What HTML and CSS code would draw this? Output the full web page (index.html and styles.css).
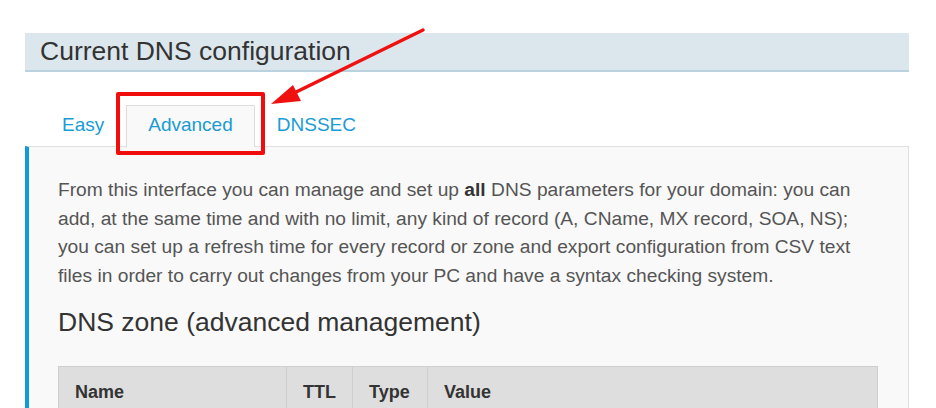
FILE: index.html
```html
<!DOCTYPE html>
<html lang="en">
<head>
	<meta charset="UTF-8">
	<title>DNS</title>
	<link rel="stylesheet" href="styles.css">
</head>
<body>
	<div class="main">
		<h2 class="box-title">Current DNS configuration</h2>
		<ul class="tabs">
			<li><a href="#">Easy</a></li>
			<li class="active"><a href="#">Advanced</a><span class="mark"></span></li>
			<li><a href="#">DNSSEC</a></li>
		</ul>
		<div class="panel">
			<p class="intro">From this interface you can manage and set up <b>all</b> DNS parameters for your domain: you can add, at the same time and with no limit, any kind of record (A, CName, MX record, SOA, NS); you can set up a refresh time for every record or zone and export configuration from CSV text files in order to carry out changes from your PC and have a syntax checking system.</p>
			<h3 class="zone-title">DNS zone (advanced management)</h3>
			<table class="zone">
				<colgroup>
					<col style="width:228px">
					<col style="width:66px">
					<col style="width:75px">
					<col>
				</colgroup>
				<tr>
					<th>Name</th>
					<th>TTL</th>
					<th>Type</th>
					<th>Value</th>
				</tr>
			</table>
		</div>
	</div>
	<!-- arrow pointing at the tab -->
	<svg class="arrow" width="936" height="408" viewBox="0 0 936 408">
		<line x1="423" y1="30" x2="288" y2="96" stroke="#f01010" stroke-width="3.5" stroke-linecap="round"/>
		<polygon points="271,104 293,85 301,101" fill="#f01010"/>
	</svg>
</body>
</html>
```

FILE: styles.css
```css
body{
	margin: 0;
	padding: 0;
	background: #fff;
	font-family: "Liberation Sans", Arial, sans-serif;
}
.main{
	width: 884px;
	margin: 0 0 0 25px;
	padding-top: 33px;
}
.box-title{
	margin: 0;
	height: 37px;
	line-height: 37px;
	padding-left: 15px;
	background: #dbe7ed;
	border-bottom: 2px solid #b9d2de;
	font-size: 26.5px;
	font-weight: normal;
	color: #333;
}
.tabs{
	list-style: none;
	margin: 33px 0 0 15px;
	padding: 0;
	display: flex;
}
.tabs li{
	position: relative;
	border: 1px solid transparent;
	border-bottom: 0;
	margin-bottom: -1px;
}
.tabs a{
	display: block;
	padding: 0 21px;
	height: 41px;
	line-height: 38px;
	font-size: 19px;
	color: #1b9bd4;
	text-decoration: none;
}
.tabs li.active{
	background: #f9f9f9;
	border-color: #dcdcdc;
}
.mark{
	position: absolute;
	left: -11px;
	right: -11px;
	top: -14px;
	bottom: -8px;
	border: 4px solid #f20d0d;
	border-radius: 2px;
}
.panel{
	background: #f9f9f9;
	border-top: 1px solid #e0e0e0;
	border-right: 1px solid #e0e0e0;
	border-left: 4px solid #0f9bd5;
	padding: 29px 30px 0 29px;
	height: 260px;
}
.intro{
	margin: 0;
	font-size: 19.2px;
	line-height: 28.5px;
	color: #555;
}
.intro b{ color: #333; }
.zone-title{
	margin: 17px 0 0;
	font-size: 26.5px;
	font-weight: normal;
	color: #333;
	line-height: 30px;
}
.zone{
	margin-top: 29px;
	width: 820px;
	border-collapse: collapse;
	table-layout: fixed;
}
.zone th{
	background: #dedede;
	border: 1px solid #cfcfcf;
	text-align: left;
	padding: 0 16px;
	height: 50px;
	font-size: 18px;
	color: #333;
}
.arrow{
	position: absolute;
	left: 0;
	top: 0;
	pointer-events: none;
}
```
